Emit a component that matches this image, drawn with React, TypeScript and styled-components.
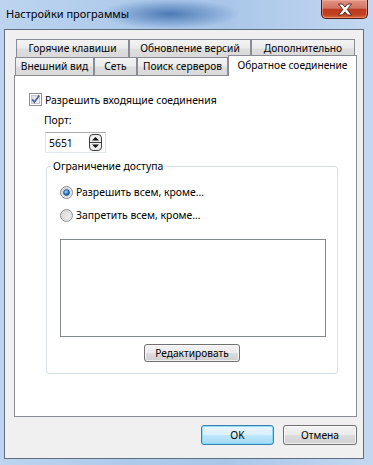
import React from 'react';
import styled, { createGlobalStyle } from 'styled-components';

const GlobalStyle = createGlobalStyle`
  html, body {
    margin: 0;
    padding: 0;
  }
  body {
    font-family: "Noto Sans", "DejaVu Sans", sans-serif;
    font-size: 10.4px;
    color: #000;
  }
`;

const topTabs = [
  { label: 'Горячие клавиши', width: 113 },
  { label: 'Обновление версий', width: 122 },
  { label: 'Дополнительно', width: 104 },
];

const bottomTabs = [
  { label: 'Внешний вид', width: 79 },
  { label: 'Сеть', width: 43 },
  { label: 'Поиск серверов', width: 91 },
  { label: 'Обратное соединение', width: 129, active: true },
];

const CheckIcon = () => (
  <svg width="13" height="13" viewBox="0 0 13 13">
    <defs>
      <linearGradient id="cbfill" x1="0" y1="0" x2="1" y2="1">
        <stop offset="0" stopColor="#d9dadb" />
        <stop offset="1" stopColor="#fbfbfb" />
      </linearGradient>
    </defs>
    <rect x="0.5" y="0.5" width="12" height="12" fill="#fff" stroke="#8f8f8f" />
    <rect x="2.5" y="2.5" width="8" height="8" fill="url(#cbfill)" stroke="#c6c7c8" />
    <path d="M3.2 6.4 L5.4 9.2 L10.2 2.6" fill="none" stroke="#4e5ea6" strokeWidth="1.7" />
  </svg>
);

const RadioIcon: React.FC<{ checked?: boolean }> = ({ checked }) => (
  <svg width="13" height="13" viewBox="0 0 13 13">
    <defs>
      <linearGradient id="rbfill" x1="0" y1="0" x2="1" y2="1">
        <stop offset="0" stopColor="#d4d5d6" />
        <stop offset="1" stopColor="#f7f7f7" />
      </linearGradient>
      <radialGradient id="rbdot" cx="0.4" cy="0.35" r="0.7">
        <stop offset="0" stopColor="#9fd5fa" />
        <stop offset="0.6" stopColor="#2a7fcf" />
        <stop offset="1" stopColor="#124e8c" />
      </radialGradient>
    </defs>
    <circle cx="6.5" cy="6.5" r="6" fill="url(#rbfill)" stroke="#8e8f8f" />
    <circle cx="6.5" cy="6.5" r="4.3" fill="none" stroke="#d8d9da" />
    {checked && <circle cx="6.5" cy="6.5" r="3" fill="url(#rbdot)" stroke="#0f3b6e" strokeWidth="0.6" />}
  </svg>
);

const SpinIcon = () => (
  <svg width="13" height="17" viewBox="0 0 13 17">
    <rect x="0.5" y="0.5" width="12" height="16" rx="3.5" fill="#eeeeee" stroke="#3c3c3c" />
    <line x1="1" y1="8.5" x2="12" y2="8.5" stroke="#3c3c3c" />
    <path d="M3 6.5 L6.5 3 L10 6.5 Z" fill="#111" />
    <path d="M3 10.5 L10 10.5 L6.5 14 Z" fill="#111" />
  </svg>
);

const CloseGlyph = () => (
  <svg width="16" height="13" viewBox="0 0 16 13">
    <path
      d="M1.5 1 L5.4 1 L8 4.1 L10.6 1 L14.5 1 L10.2 6.5 L14.5 12 L10.6 12 L8 8.9 L5.4 12 L1.5 12 L5.8 6.5 Z"
      fill="#fff"
      stroke="#4a1c14"
      strokeWidth="0.9"
      strokeLinejoin="round"
    />
  </svg>
);

export default function App() {
  return (
    <>
      <GlobalStyle />
      <Window>
        <TitleBar>
          <Title>Настройки программы</Title>
          <CloseButton>
            <CloseGlyph />
          </CloseButton>
        </TitleBar>
        <Client>
          <TabRow $inset={2}>
            {topTabs.map(t => (
              <Tab key={t.label} $width={t.width}>{t.label}</Tab>
            ))}
          </TabRow>
          <TabRow $inset={1}>
            {bottomTabs.map(t => (
              <Tab key={t.label} $width={t.width} $active={t.active}>{t.label}</Tab>
            ))}
          </TabRow>
          <Panel>
            <CheckRow>
              <CheckIcon />
              <span>Разрешить входящие соединения</span>
            </CheckRow>
            <PortLabel>Порт:</PortLabel>
            <SpinBox>
              <span>5651</span>
              <SpinIcon />
            </SpinBox>
            <GroupBox>
              <Legend>Ограничение доступа</Legend>
              <RadioRow>
                <RadioIcon checked />
                <span>Разрешить всем, кроме...</span>
              </RadioRow>
              <RadioRow>
                <RadioIcon />
                <span>Запретить всем, кроме...</span>
              </RadioRow>
              <ListBox />
              <EditButton>Редактировать</EditButton>
            </GroupBox>
          </Panel>
          <Footer>
            <DialogButton $primary>OK</DialogButton>
            <DialogButton>Отмена</DialogButton>
          </Footer>
        </Client>
      </Window>
    </>
  );
}

const Window = styled.div`
  width: 373px;
  height: 465px;
  display: flex;
  flex-direction: column;
  overflow: hidden;
  background:
    radial-gradient(ellipse 70px 15px at 170px 14px, rgba(58, 108, 172, 0.85), rgba(58, 108, 172, 0)),
    linear-gradient(to right, #bcd4ef 0%, #aecaeb 35%, #a9c6e9 60%, #c3d8f0 100%);
`;

const TitleBar = styled.div`
  height: 29px;
  flex: none;
  display: flex;
  align-items: flex-start;
  justify-content: space-between;
  padding: 0 5px 0 6px;
`;

const Title = styled.div`
  line-height: 28px;
  font-size: 11px;
  color: #000;
`;

const CloseButton = styled.div`
  width: 47px;
  height: 19px;
  box-sizing: border-box;
  display: flex;
  align-items: center;
  justify-content: center;
  border: 1px solid #4f1b12;
  border-top: none;
  border-radius: 0 0 5px 5px;
  background: linear-gradient(to bottom, #e39584 0%, #d27464 45%, #bd3a22 52%, #c2411f 80%, #d9683a 100%);
  box-shadow: inset 0 0 0 1px rgba(255, 190, 175, 0.45);
`;

const Client = styled.div`
  flex: 1;
  display: flex;
  flex-direction: column;
  margin: 0 9px 6px 4px;
  padding: 9px 6px 13px 9px;
  border: 1px solid #5f6f80;
  background: #f0f0f0;
`;

const TabRow = styled.div<{ $inset: number }>`
  display: flex;
  height: 18px;
  margin-left: ${p => p.$inset}px;
`;

const Tab = styled.div<{ $width: number; $active?: boolean }>`
  width: ${p => p.$width}px;
  box-sizing: border-box;
  flex: none;
  text-align: center;
  white-space: nowrap;
  font-size: 10.2px;
  border: 1px solid #898c95;
  border-bottom: none;
  line-height: 17px;
  height: ${p => (p.$active ? 21 : 18)}px;
  margin-top: ${p => (p.$active ? -2 : 0)}px;
  position: ${p => (p.$active ? 'relative' : 'static')};
  z-index: ${p => (p.$active ? 1 : 'auto')};
  padding-top: ${p => (p.$active ? 1 : 0)}px;
  background: ${p =>
    p.$active ? '#fff' : 'linear-gradient(to bottom, #f3f3f3 0%, #ebebeb 48%, #dedede 52%, #d9d9d9 100%)'};
`;

const Panel = styled.div`
  height: 342px;
  box-sizing: border-box;
  border: 1px solid #898c95;
  background: #fff;
  padding: 16px 0 0 14px;
  display: flex;
  flex-direction: column;
  align-items: flex-start;
`;

const CheckRow = styled.div`
  display: flex;
  align-items: center;
  gap: 3px;
  height: 15px;
`;

const PortLabel = styled.div`
  margin: 6px 0 0 15px;
  line-height: 14px;
`;

const SpinBox = styled.div`
  margin: 5px 0 0 16px;
  width: 61px;
  height: 21px;
  box-sizing: border-box;
  display: flex;
  align-items: center;
  justify-content: space-between;
  padding: 0 3px 0 3px;
  border: 1px solid #abadb3;
  border-color: #abadb3 #dbdfe6 #e3e9ef #e2e3ea;
  background: #fff;
`;

const GroupBox = styled.div`
  position: relative;
  margin: 13px 0 0 17px;
  width: 292px;
  height: 208px;
  box-sizing: border-box;
  border: 1px solid #d5dfe5;
  border-radius: 3px;
  padding: 18px 0 0 13px;
  display: flex;
  flex-direction: column;
  align-items: flex-start;
`;

const Legend = styled.div`
  position: absolute;
  top: -8px;
  left: 4px;
  padding: 0 2px;
  line-height: 14px;
  background: #fff;
`;

const RadioRow = styled.div`
  display: flex;
  align-items: center;
  gap: 3px;
  height: 14px;
  margin-bottom: 9px;
`;

const ListBox = styled.div`
  margin-top: 8px;
  width: 266px;
  height: 98px;
  box-sizing: border-box;
  border: 1px solid #828790;
  background: #fff;
`;

const EditButton = styled.div`
  align-self: center;
  margin: 7px 0 0 -13px;
  width: 96px;
  height: 18px;
  box-sizing: border-box;
  display: flex;
  align-items: center;
  justify-content: center;
  font-size: 10.2px;
  border: 1px solid #707070;
  border-radius: 3px;
  background: linear-gradient(to bottom, #f2f2f2 0%, #ebebeb 48%, #dddddd 52%, #cfcfcf 100%);
  box-shadow: inset 0 0 0 1px rgba(255, 255, 255, 0.7);
`;

const Footer = styled.div`
  display: flex;
  justify-content: flex-end;
  gap: 9px;
  margin-top: 8px;
`;

const DialogButton = styled.div<{ $primary?: boolean }>`
  width: ${p => (p.$primary ? 73 : 74)}px;
  height: 20px;
  box-sizing: border-box;
  display: flex;
  align-items: center;
  justify-content: center;
  font-size: 10.2px;
  border: 1px solid ${p => (p.$primary ? '#3c7fb1' : '#707070')};
  border-radius: 3px;
  background: ${p =>
    p.$primary
      ? 'linear-gradient(to bottom, #eaf6fd 0%, #d9f0fc 48%, #bee6fd 52%, #a7d9f5 100%)'
      : 'linear-gradient(to bottom, #f2f2f2 0%, #ebebeb 48%, #dddddd 52%, #cfcfcf 100%)'};
  box-shadow: inset 0 0 0 1px ${p => (p.$primary ? 'rgba(120, 215, 250, 0.8)' : 'rgba(255, 255, 255, 0.7)')};
`;
